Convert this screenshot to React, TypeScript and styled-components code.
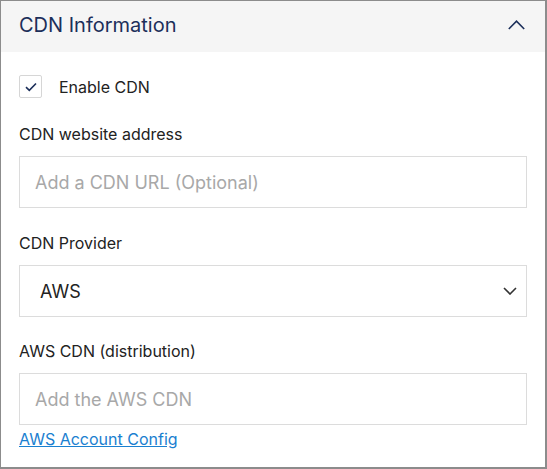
import React from "react";
import styled, { createGlobalStyle } from "styled-components";

const Global = createGlobalStyle`
  html, body { margin: 0; padding: 0; background: #fff; }
  body { font-family: Inter, "Noto Sans", sans-serif; }
  * { box-sizing: border-box; }
`;

const Panel = styled.section`
  width: 547px;
  height: 469px;
  border-style: solid;
  border-color: #8c8c8c;
  border-width: 1px 2px 2px 1px;
  background: #fff;
  display: flex;
  flex-direction: column;
`;

const Header = styled.div`
  height: 51px;
  background: #f5f5f5;
  display: flex;
  align-items: center;
  justify-content: space-between;
  padding: 0 20px 3px 18px;
`;

const Title = styled.h2`
  margin: 0;
  font-size: 20px;
  font-weight: 400;
  color: #1c2f5a;
  line-height: 26px;
`;

const IconButton = styled.span`
  display: flex;
  align-items: center;
  color: #1c2f5a;
`;

const Body = styled.div`
  padding: 23px 18px 0 18px;
  display: flex;
  flex-direction: column;
`;

const CheckRow = styled.label`
  display: flex;
  align-items: center;
  gap: 17px;
  height: 23px;
  font-size: 16px;
  color: #222;
  margin-bottom: 24px;
`;

const CheckBox = styled.span`
  width: 23px;
  height: 23px;
  border: 1px solid #d6d6d6;
  border-radius: 2px;
  display: flex;
  align-items: center;
  justify-content: center;
  color: #1c2f5a;
`;

const Field = styled.div<{ $gap?: number }>`
  display: flex;
  flex-direction: column;
  margin-bottom: ${(p) => p.$gap ?? 23}px;
`;

const Label = styled.div`
  font-size: 16px;
  line-height: 24px;
  color: #222;
  margin-bottom: 10px;
`;

const Box = styled.div<{ $inset?: number }>`
  height: 52px;
  border: 1px solid #dcdcdc;
  display: flex;
  align-items: center;
  justify-content: space-between;
  padding: 0 9px 0 ${(p) => p.$inset ?? 15}px;
  font-size: 18px;
`;

const Placeholder = styled.span`
  color: #a8a8a8;
`;

const Value = styled.span`
  color: #222;
`;

const Link = styled.a`
  margin-top: 2px;
  font-size: 16px;
  line-height: 24px;
  color: #1a80d0;
  text-decoration: underline;
  align-self: flex-start;
`;

export default function App() {
  return (
    <>
      <Global />
      <Panel>
        <Header>
          <Title>CDN Information</Title>
          <IconButton>
            <svg width="17" height="10" viewBox="0 0 17 10" fill="none">
              <path d="M0.8 9 L8.5 1.2 L16.2 9" stroke="currentColor" strokeWidth="1.6" />
            </svg>
          </IconButton>
        </Header>
        <Body>
          <CheckRow>
            <CheckBox>
              <svg width="12" height="10" viewBox="0 0 12 10" fill="none">
                <path d="M1 5.2 L4.3 8.3 L11 1.5" stroke="currentColor" strokeWidth="1.6" />
              </svg>
            </CheckBox>
            Enable CDN
          </CheckRow>
          <Field>
            <Label>CDN website address</Label>
            <Box>
              <Placeholder>Add a CDN URL (Optional)</Placeholder>
            </Box>
          </Field>
          <Field $gap={22}>
            <Label>CDN Provider</Label>
            <Box $inset={20}>
              <Value>AWS</Value>
              <svg width="14" height="8" viewBox="0 0 14 8" fill="none">
                <path d="M1 1 L7 7 L13 1" stroke="#333" strokeWidth="1.6" />
              </svg>
            </Box>
          </Field>
          <Field $gap={0}>
            <Label>AWS CDN (distribution)</Label>
            <Box>
              <Placeholder>Add the AWS CDN</Placeholder>
            </Box>
          </Field>
          <Link href="#">AWS Account Config</Link>
        </Body>
      </Panel>
    </>
  );
}
